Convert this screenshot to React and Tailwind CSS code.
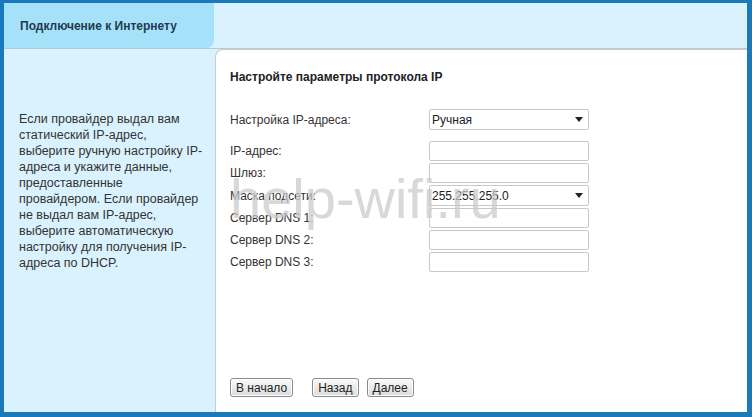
import { useState } from "react";

const font = { fontFamily: '"Liberation Sans", Arial, sans-serif' };

const helpLines = [
  "Если провайдер выдал вам",
  "статический IP-адрес,",
  "выберите ручную настройку IP-",
  "адреса и укажите данные,",
  "предоставленные",
  "провайдером. Если провайдер",
  "не выдал вам IP-адрес,",
  "выберите автоматическую",
  "настройку для получения IP-",
  "адреса по DHCP.",
];

const Caret = () => (
  <svg width="8" height="5" viewBox="0 0 8 5" className="shrink-0">
    <path d="M0 0h8L4 5z" fill="#222" />
  </svg>
);

const SelectBox = ({ value }) => (
  <div className="flex h-[21px] w-[160px] items-center justify-between rounded-[2px] border border-[#c8c8c8] bg-white pl-[2px] pr-[5px] text-[12px] text-[#222]">
    <span>{value}</span>
    <Caret />
  </div>
);

const TextBox = () => (
  <div className="h-[20px] w-[160px] rounded-[2px] border border-[#c8c8c8] bg-white" />
);

const Row = ({ label, children, className = "" }) => (
  <div className={`flex items-center ${className}`}>
    <div className="w-[199px] text-[12px] text-[#333]">{label}</div>
    {children}
  </div>
);

const Btn = ({ children }) => (
  <button className="h-[19px] rounded-[3px] border border-[#8a8a8a] bg-gradient-to-b from-[#fafafa] to-[#dcdcdc] px-[5px] text-[12px] leading-none text-[#222] shadow-[inset_0_0_0_1px_#fff]">
    {children}
  </button>
);

export default function App() {
  const [mode] = useState("Ручная");

  return (
    <div
      className="h-[417px] w-[752px] overflow-hidden border-b-[5px] border-l-[4px] border-r-[5px] border-t-[3px] border-[#1c79b9] bg-[#d9f2fd]"
      style={font}
    >
      <div className="flex h-full flex-col">
        {/* header */}
        <div className="flex h-[46px] shrink-0 border-b border-[#bcc9d0]">
          <div className="flex w-[210px] items-center rounded-br-[8px] bg-[#a6e1fa] pl-[16px] text-[12px] font-bold text-[#1f3b50]">
            Подключение к Интернету
          </div>
          <div className="flex-1" />
        </div>

        <div className="flex min-h-0 flex-1">
          {/* left help */}
          <div className="w-[211px] shrink-0 pl-[15px] pt-[62px]">
            <p className="whitespace-nowrap text-[12.5px] leading-[16px] text-[#333]">
              {helpLines.map((l, i) => (
                <span key={i} className="block">
                  {l}
                </span>
              ))}
            </p>
          </div>

          {/* content */}
          <div className="relative flex flex-1 flex-col rounded-tl-[8px] border-l border-t border-[#c4cdd2] bg-white pl-[14px] pt-[18px]">
            <div className="text-[12px] font-bold text-[#222]">
              Настройте параметры протокола IP
            </div>

            <div className="mt-[23px] flex flex-col">
              <Row label="Настройка IP-адреса:">
                <SelectBox value={mode} />
              </Row>
              <div className="mt-[11px] flex flex-col gap-[2px]">
                <Row label="IP-адрес:">
                  <TextBox />
                </Row>
                <Row label="Шлюз:">
                  <TextBox />
                </Row>
                <Row label="Маска подсети:">
                  <SelectBox value="255.255.255.0" />
                </Row>
                <Row label="Сервер DNS 1:">
                  <TextBox />
                </Row>
                <Row label="Сервер DNS 2:">
                  <TextBox />
                </Row>
                <Row label="Сервер DNS 3:">
                  <TextBox />
                </Row>
              </div>
            </div>

            <div className="mt-auto mb-[15px] flex items-center">
              <Btn>В начало</Btn>
              <div className="ml-[19px] flex gap-[8px]">
                <Btn>Назад</Btn>
                <Btn>Далее</Btn>
              </div>
            </div>

            {/* watermark */}
            <div className="pointer-events-none absolute left-[14px] top-[121px] select-none text-[56px] leading-none text-[#cbcbcb] opacity-75">
              help-wifi.ru
            </div>
          </div>
        </div>
      </div>
    </div>
  );
}
